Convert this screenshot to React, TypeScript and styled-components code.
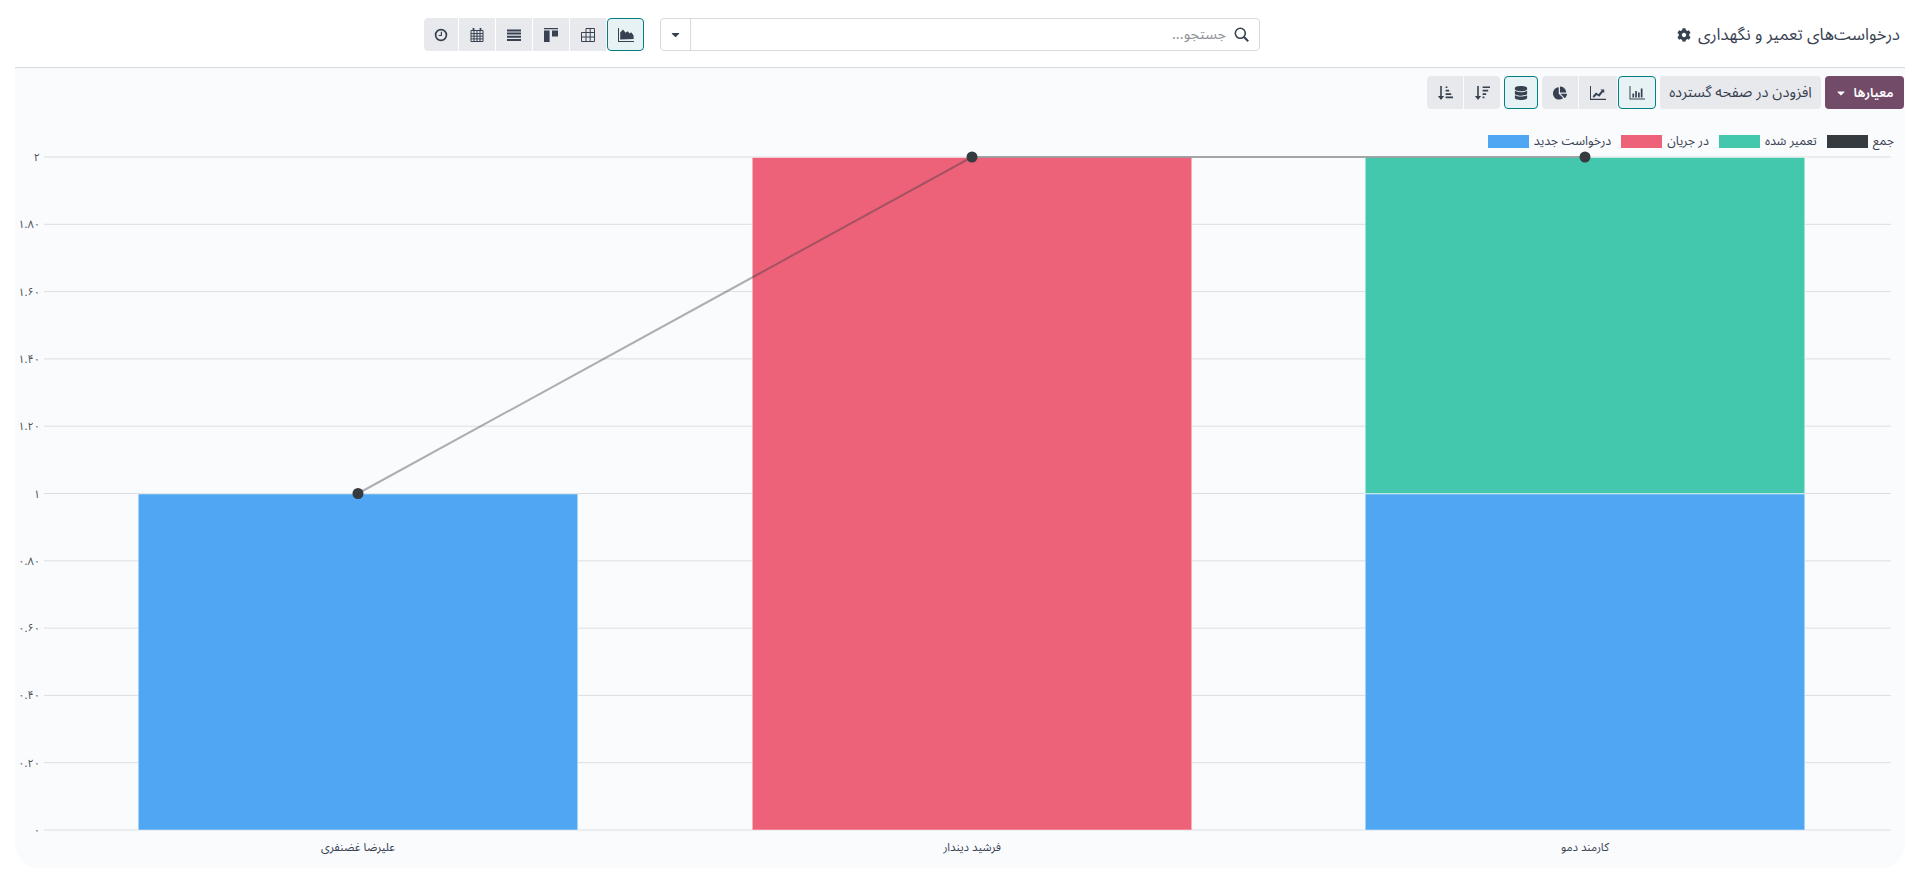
import { createGlobalStyle, styled } from "styled-components";
import { FaCog, FaCaretDown, FaDatabase, FaChartPie } from "react-icons/fa";

const GlobalStyle = createGlobalStyle`
  html, body {
    margin: 0;
    padding: 0;
    background: #fff;
  }
  body {
    font-family: "Noto Sans Arabic", "Vazirmatn", "DejaVu Sans", sans-serif;
    color: #374151;
    font-size: 13px;
  }
`;

const COLORS = {
  blue: "#4fa6f2",
  red: "#ed6278",
  green: "#43c7ad",
  total: "#363b40",
};

const Page = styled.div`
  direction: rtl;
  width: 1921px;
  height: 883px;
  box-sizing: border-box;
  padding: 0 16px 15px 15px;
  display: flex;
  flex-direction: column;
  overflow: hidden;
`;

const ControlPanel = styled.div`
  height: 68px;
  flex: none;
  box-sizing: border-box;
  padding: 18px 0 0 0;
  border-bottom: 1px solid #d8dadd;
  display: grid;
  grid-template-columns: 645px 600px 16px 220px;
  justify-content: start;
`;

const Title = styled.div`
  display: flex;
  align-items: center;
  gap: 7px;
  height: 33px;
  padding-right: 5px;
  font-size: 16.6px;
  color: #374151;
  white-space: nowrap;
`;

const SearchBox = styled.div`
  display: flex;
  height: 33px;
  box-sizing: border-box;
  border: 1px solid #d8dadd;
  border-radius: 4px;
  background: #fff;
`;

const SearchInput = styled.div`
  flex: 1;
  display: flex;
  align-items: center;
  gap: 8px;
  padding-right: 10px;
  color: #8f939a;
  font-size: 14.5px;
  svg {
    color: #374151;
  }
`;

const SearchToggle = styled.div`
  width: 29px;
  border-right: 1px solid #d8dadd;
  display: flex;
  align-items: center;
  justify-content: center;
  color: #374151;
  font-size: 13px;
`;

const Gap = styled.div``;

const ButtonGroup = styled.div`
  display: flex;
  gap: 1px;
  height: 33px;
`;

const IconButton = styled.button<{ $active?: boolean; $w: number }>`
  width: ${(p) => p.$w}px;
  height: 33px;
  flex: none;
  box-sizing: border-box;
  padding: 0;
  display: flex;
  align-items: center;
  justify-content: center;
  font-size: 14px;
  color: #374151;
  background: ${(p) => (p.$active ? "#e6f2f3" : "#e7e9ed")};
  border: 1px solid ${(p) => (p.$active ? "#017e84" : "#e7e9ed")};
  border-radius: ${(p) => (p.$active ? "4px" : "0")};
  &:first-child {
    border-top-right-radius: 4px;
    border-bottom-right-radius: 4px;
  }
  &:last-child {
    border-top-left-radius: 4px;
    border-bottom-left-radius: 4px;
  }
`;

const Panel = styled.div`
  flex: 1;
  min-height: 0;
  background: #fafbfd;
  border-radius: 0 0 24px 24px;
  display: flex;
  flex-direction: column;
`;

const Toolbar = styled.div`
  display: flex;
  align-items: center;
  height: 33px;
  margin-top: 8px;
  padding-right: 1px;
  flex: none;
`;

const PrimaryButton = styled.button`
  width: 79px;
  height: 33px;
  box-sizing: border-box;
  border: 0;
  padding: 0;
  border-radius: 4px;
  background: #714b67;
  color: #fff;
  font: inherit;
  font-size: 13px;
  font-weight: 600;
  display: flex;
  align-items: center;
  justify-content: center;
  gap: 6px;
  margin-left: 4px;
`;

const TextButton = styled.button`
  width: 161px;
  height: 33px;
  box-sizing: border-box;
  border: 0;
  padding: 0;
  border-radius: 4px;
  background: #e7e9ed;
  color: #374151;
  font: inherit;
  font-size: 14.7px;
  margin-left: 4px;
  white-space: nowrap;
`;

const ToolbarGroup = styled(ButtonGroup)`
  margin-left: 4px;
`;

const Legend = styled.div`
  display: flex;
  align-items: center;
  gap: 10px;
  height: 14px;
  margin-top: 25px;
  padding-right: 11px;
  font-size: 12.5px;
  color: #374151;
  flex: none;
`;

const LegendItem = styled.div`
  display: flex;
  align-items: center;
  gap: 5px;
`;

const Swatch = styled.span<{ $color: string }>`
  width: 41px;
  height: 13px;
  background: ${(p) => p.$color};
`;

const ChartWrap = styled.div`
  flex: 1;
  min-height: 0;
  svg {
    display: block;
    direction: ltr;
  }
`;

const Svg = ({ children }: { children: React.ReactNode }) => (
  <svg width="16" height="14" viewBox="0 0 16 14" fill="currentColor">
    {children}
  </svg>
);

const SearchIcon = () => (
  <svg width="15" height="15" viewBox="0 0 15 15" fill="none" stroke="currentColor">
    <circle cx="6.3" cy="6.3" r="5" strokeWidth="1.6" />
    <path d="M10 10l4.2 4.2" strokeWidth="2" />
  </svg>
);

const AreaIcon = () => (
  <Svg>
    <path d="M0 0h1v13h15v1H0z" />
    <path d="M2.2 11.6V4.6L5 1.4l2.6 3.4 2-1.6 2.2 2.4 1.4-1.4 2.4 3.2v3.6z" />
  </Svg>
);

const TableIcon = () => (
  <svg width="14" height="14" viewBox="0 0 14 14" fill="none" stroke="currentColor" strokeWidth="1">
    <path d="M5 .5h8.5v13H.5V4.5H13.5M.5 9h13M5 .5v13M9.2.5v13" />
  </svg>
);

const KanbanIcon = () => (
  <Svg>
    <path d="M1 0h14v1.2H1zM1 2.4h5.6V14H1zM9 2.4h6v6H9z" />
  </Svg>
);

const ListIcon = () => (
  <Svg>
    <path d="M1 1.4h14v2H1zM1 4.6h14v2H1zM1 7.8h14v2H1zM1 11h14v2H1z" />
  </Svg>
);

const CalendarIcon = () => (
  <svg width="14" height="14" viewBox="0 0 14 14" fill="none" stroke="currentColor" strokeWidth="1">
    <path d="M1 2.5h12v11H1zM1 5.6h12M1 8.2h12M1 10.9h12M4 2.5v11M7 2.5v11M10 2.5v11" />
    <path d="M3.5 0v3M10.5 0v3" strokeWidth="1.8" />
  </svg>
);

const ClockIcon = () => (
  <svg width="14" height="14" viewBox="0 0 14 14" fill="none" stroke="currentColor">
    <circle cx="7" cy="7" r="5.4" strokeWidth="1.7" />
    <path d="M7.4 3.8v3.7H4.6" strokeWidth="1.2" />
  </svg>
);

const BarIcon = () => (
  <Svg>
    <path d="M.5 0h1v12.4H16v1.2H.5z" />
    <path d="M3.4 7.4h1.7v4.2H3.4zM6.2 5h1.7v6.6H6.2zM9 6.4h1.7v5.2H9zM11.8 2.6h1.7v9h-1.7z" />
  </Svg>
);

const LineIcon = () => (
  <Svg>
    <path d="M0 0h1v12.8h15V14H0z" />
    <path d="M2.6 10.2l3.4-3.6 2.6 1.7 3-3.8-1.3-1.1h3.9v3.8l-1.2-1.1-3.7 4.6-2.6-1.8-2.9 2.9z" />
  </Svg>
);

const SortDescIcon = () => (
  <Svg>
    <path d="M3.2 0h1.6v10h2.3L4 14 .9 10h2.3z" />
    <path d="M8.6 .4H16v1.7H8.6zM8.6 3.8h5.6v1.7H8.6zM8.6 7.2h3.6v1.7H8.6zM8.6 10.6h1.8v1.7H8.6z" />
  </Svg>
);

const SortAscIcon = () => (
  <Svg>
    <path d="M3.2 0h1.6v10h2.3L4 14 .9 10h2.3z" />
    <path d="M8.6 .4h1.8v1.7H8.6zM8.6 3.8h3.6v1.7H8.6zM8.6 7.2h5.6v1.7H8.6zM8.6 10.6H16v1.7H8.6z" />
  </Svg>
);

const TICKS = ["۲", "۱.۸۰", "۱.۶۰", "۱.۴۰", "۱.۲۰", "۱", "۰.۸۰", "۰.۶۰", "۰.۴۰", "۰.۲۰", "۰"];

const CHART_W = 1890;
const CHART_H = 720;
const TOP = 9;
const STEP = 67.3;
const yOf = (v: number) => TOP + (2 - v) * STEP * 5;
const BAR_W = 439.5;
const X_SHIFT = 15;

const GROUPS = [
  { name: "علیرضا غضنفری", cx: 358, stacks: [{ from: 0, to: 1, color: COLORS.blue }], total: 1 },
  { name: "فرشید دیندار", cx: 972, stacks: [{ from: 0, to: 2, color: COLORS.red }], total: 2 },
  {
    name: "کارمند دمو",
    cx: 1585,
    stacks: [
      { from: 0, to: 1, color: COLORS.blue },
      { from: 1, to: 2, color: COLORS.green },
    ],
    total: 2,
  },
];

const Chart = () => {
  const linePoints = GROUPS.map((g) => `${g.cx - X_SHIFT},${yOf(g.total)}`).join(" ");
  return (
    <svg width={CHART_W} height={CHART_H} viewBox={`0 0 ${CHART_W} ${CHART_H}`}>
      {TICKS.map((t, i) => {
        const y = TOP + i * STEP;
        return (
          <g key={t}>
            <line x1={29} x2={1876} y1={y} y2={y} stroke="#dcdee1" strokeWidth="1" />
            <text x={25} y={y + 4} textAnchor="end" fontSize="11" fill="#4b5058">
              {t}
            </text>
          </g>
        );
      })}
      {GROUPS.map((g) =>
        g.stacks.map((s) => (
          <rect
            key={g.name + s.color}
            x={g.cx - X_SHIFT - BAR_W / 2}
            y={yOf(s.to) + 0.5}
            width={BAR_W}
            height={yOf(s.from) - yOf(s.to) - 0.5}
            fill={s.color}
            stroke="#fff"
            strokeOpacity="0.45"
            strokeWidth="1"
          />
        ))
      )}
      <polyline points={linePoints} fill="none" stroke="rgba(54,59,64,0.4)" strokeWidth="2" />
      {GROUPS.map((g) => (
        <circle key={g.name} cx={g.cx - X_SHIFT} cy={yOf(g.total)} r="5.5" fill={COLORS.total} />
      ))}
      {GROUPS.map((g) => (
        <text
          key={g.name}
          x={g.cx - X_SHIFT}
          y={TOP + 10 * STEP + 21}
          textAnchor="middle"
          fontSize="11.5"
          fill="#374151"
          direction="rtl"
        >
          {g.name}
        </text>
      ))}
    </svg>
  );
};

export default function App() {
  return (
    <>
      <GlobalStyle />
      <Page>
        <ControlPanel>
          <Title>
            درخواست‌های تعمیر و نگهداری
            <FaCog size={14} />
          </Title>
          <SearchBox>
            <SearchInput>
              <SearchIcon />
              جستجو...
            </SearchInput>
            <SearchToggle>
              <FaCaretDown />
            </SearchToggle>
          </SearchBox>
          <Gap />
          <ButtonGroup>
            <IconButton $active $w={37}>
              <AreaIcon />
            </IconButton>
            <IconButton $w={36}>
              <TableIcon />
            </IconButton>
            <IconButton $w={36}>
              <KanbanIcon />
            </IconButton>
            <IconButton $w={36}>
              <ListIcon />
            </IconButton>
            <IconButton $w={36}>
              <CalendarIcon />
            </IconButton>
            <IconButton $w={34}>
              <ClockIcon />
            </IconButton>
          </ButtonGroup>
        </ControlPanel>
        <Panel>
          <Toolbar>
            <PrimaryButton>
              معیارها
              <FaCaretDown size={12} />
            </PrimaryButton>
            <TextButton>افزودن در صفحه گسترده</TextButton>
            <ToolbarGroup>
              <IconButton $active $w={38}>
                <BarIcon />
              </IconButton>
              <IconButton $w={38}>
                <LineIcon />
              </IconButton>
              <IconButton $w={36}>
                <FaChartPie />
              </IconButton>
            </ToolbarGroup>
            <ToolbarGroup>
              <IconButton $active $w={34}>
                <FaDatabase />
              </IconButton>
            </ToolbarGroup>
            <ToolbarGroup>
              <IconButton $w={36}>
                <SortDescIcon />
              </IconButton>
              <IconButton $w={36}>
                <SortAscIcon />
              </IconButton>
            </ToolbarGroup>
          </Toolbar>
          <Legend>
            <LegendItem>
              جمع
              <Swatch $color={COLORS.total} />
            </LegendItem>
            <LegendItem>
              تعمیر شده
              <Swatch $color={COLORS.green} />
            </LegendItem>
            <LegendItem>
              در جریان
              <Swatch $color={COLORS.red} />
            </LegendItem>
            <LegendItem>
              درخواست جدید
              <Swatch $color={COLORS.blue} />
            </LegendItem>
          </Legend>
          <ChartWrap>
            <Chart />
          </ChartWrap>
        </Panel>
      </Page>
    </>
  );
}
